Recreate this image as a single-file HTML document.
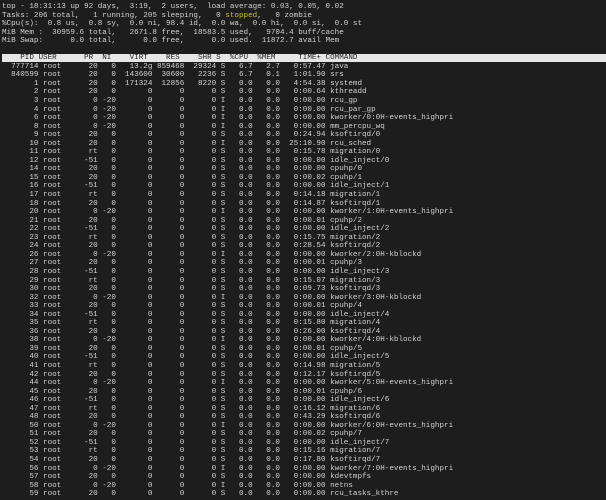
<!DOCTYPE html>
<html><head><meta charset="utf-8"><style>
html,body{margin:0;padding:0;background:#1d1d1d;width:606px;height:500px;overflow:hidden;position:relative}
.bar{position:absolute;left:2px;right:0;top:54px;height:8px;background:#e6e6e6}
pre{position:relative;margin:0;padding:3px 0 0 2px;font-family:"Liberation Mono",monospace;font-size:7.6px;line-height:8.54px;color:#d2d2d2;white-space:pre}
.h{color:#222}
.y{color:#c9c12a}
</style></head><body><div class="bar"></div><pre>top - 18:31:13 up 92 days,  3:19,  2 users,  load average: 0.03, 0.05, 0.02
Tasks: 206 total,   1 running, 205 sleeping,   0 <span class="y">stopped</span>,   0 zombie
%Cpu(s):  0.8 us,  0.8 sy,  0.0 ni, 98.4 id,  0.0 wa,  0.0 hi,  0.0 si,  0.0 st
MiB Mem :  30959.6 total,   2671.8 free,  18583.5 used,   9704.4 buff/cache
MiB Swap:      0.0 total,      0.0 free,      0.0 used.  11872.7 avail Mem

<span class="h">    PID USER      PR  NI    VIRT    RES    SHR S  %CPU  %MEM     TIME+ COMMAND</span>
  777714 root      20   0   13.2g 859468  29324 S   6.7   2.7   0:57.47 java
  840599 root      20   0  143600  30600   2236 S   6.7   0.1   1:01.90 srs
       1 root      20   0  171324  12856   8220 S   0.0   0.0   4:54.38 systemd
       2 root      20   0       0      0      0 S   0.0   0.0   0:00.64 kthreadd
       3 root       0 -20       0      0      0 I   0.0   0.0   0:00.00 rcu_gp
       4 root       0 -20       0      0      0 I   0.0   0.0   0:00.00 rcu_par_gp
       6 root       0 -20       0      0      0 I   0.0   0.0   0:00.00 kworker/0:0H-events_highpri
       8 root       0 -20       0      0      0 I   0.0   0.0   0:00.00 mm_percpu_wq
       9 root      20   0       0      0      0 S   0.0   0.0   0:24.94 ksoftirqd/0
      10 root      20   0       0      0      0 I   0.0   0.0  25:10.90 rcu_sched
      11 root      rt   0       0      0      0 S   0.0   0.0   0:15.78 migration/0
      12 root     -51   0       0      0      0 S   0.0   0.0   0:00.00 idle_inject/0
      14 root      20   0       0      0      0 S   0.0   0.0   0:00.00 cpuhp/0
      15 root      20   0       0      0      0 S   0.0   0.0   0:00.02 cpuhp/1
      16 root     -51   0       0      0      0 S   0.0   0.0   0:00.00 idle_inject/1
      17 root      rt   0       0      0      0 S   0.0   0.0   0:14.18 migration/1
      18 root      20   0       0      0      0 S   0.0   0.0   0:14.87 ksoftirqd/1
      20 root       0 -20       0      0      0 I   0.0   0.0   0:00.00 kworker/1:0H-events_highpri
      21 root      20   0       0      0      0 S   0.0   0.0   0:00.01 cpuhp/2
      22 root     -51   0       0      0      0 S   0.0   0.0   0:00.00 idle_inject/2
      23 root      rt   0       0      0      0 S   0.0   0.0   0:15.75 migration/2
      24 root      20   0       0      0      0 S   0.0   0.0   0:28.54 ksoftirqd/2
      26 root       0 -20       0      0      0 I   0.0   0.0   0:00.00 kworker/2:0H-kblockd
      27 root      20   0       0      0      0 S   0.0   0.0   0:00.01 cpuhp/3
      28 root     -51   0       0      0      0 S   0.0   0.0   0:00.00 idle_inject/3
      29 root      rt   0       0      0      0 S   0.0   0.0   0:15.07 migration/3
      30 root      20   0       0      0      0 S   0.0   0.0   0:09.73 ksoftirqd/3
      32 root       0 -20       0      0      0 I   0.0   0.0   0:00.00 kworker/3:0H-kblockd
      33 root      20   0       0      0      0 S   0.0   0.0   0:00.01 cpuhp/4
      34 root     -51   0       0      0      0 S   0.0   0.0   0:00.00 idle_inject/4
      35 root      rt   0       0      0      0 S   0.0   0.0   0:15.80 migration/4
      36 root      20   0       0      0      0 S   0.0   0.0   0:26.00 ksoftirqd/4
      38 root       0 -20       0      0      0 I   0.0   0.0   0:00.00 kworker/4:0H-kblockd
      39 root      20   0       0      0      0 S   0.0   0.0   0:00.01 cpuhp/5
      40 root     -51   0       0      0      0 S   0.0   0.0   0:00.00 idle_inject/5
      41 root      rt   0       0      0      0 S   0.0   0.0   0:14.98 migration/5
      42 root      20   0       0      0      0 S   0.0   0.0   0:12.17 ksoftirqd/5
      44 root       0 -20       0      0      0 I   0.0   0.0   0:00.00 kworker/5:0H-events_highpri
      45 root      20   0       0      0      0 S   0.0   0.0   0:00.01 cpuhp/6
      46 root     -51   0       0      0      0 S   0.0   0.0   0:00.00 idle_inject/6
      47 root      rt   0       0      0      0 S   0.0   0.0   0:16.12 migration/6
      48 root      20   0       0      0      0 S   0.0   0.0   0:43.29 ksoftirqd/6
      50 root       0 -20       0      0      0 I   0.0   0.0   0:00.00 kworker/6:0H-events_highpri
      51 root      20   0       0      0      0 S   0.0   0.0   0:00.02 cpuhp/7
      52 root     -51   0       0      0      0 S   0.0   0.0   0:00.00 idle_inject/7
      53 root      rt   0       0      0      0 S   0.0   0.0   0:15.16 migration/7
      54 root      20   0       0      0      0 S   0.0   0.0   0:17.80 ksoftirqd/7
      56 root       0 -20       0      0      0 I   0.0   0.0   0:00.00 kworker/7:0H-events_highpri
      57 root      20   0       0      0      0 S   0.0   0.0   0:00.00 kdevtmpfs
      58 root       0 -20       0      0      0 I   0.0   0.0   0:00.00 netns
      59 root      20   0       0      0      0 S   0.0   0.0   0:00.00 rcu_tasks_kthre
</pre></body></html>
